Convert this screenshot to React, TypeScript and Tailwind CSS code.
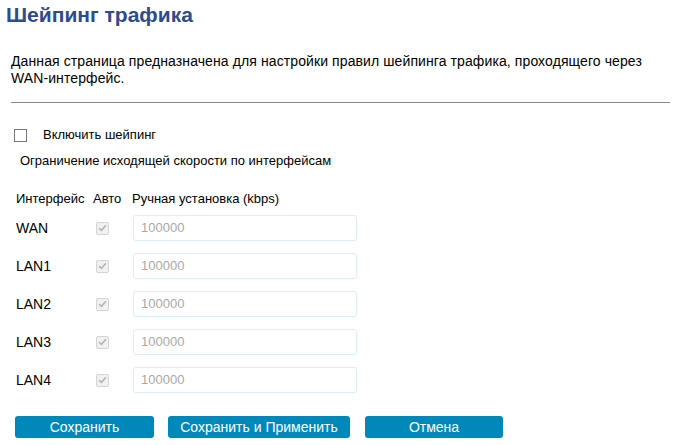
import { useState } from "react";

const rows = ["WAN", "LAN1", "LAN2", "LAN3", "LAN4"];

function AutoBox() {
  return (
    <span className="flex h-[13px] w-[13px] items-center justify-center rounded-[2px] border border-[#d4d4d4] bg-[#f1f1f1]">
      <svg width="9" height="8" viewBox="0 0 9 8">
        <path d="M1 4.2 L3.4 6.4 L8 1.2" fill="none" stroke="#b5b5b5" strokeWidth="1.6" />
      </svg>
    </span>
  );
}

export default function App() {
  const [enabled, setEnabled] = useState(false);

  return (
    <div className="h-[445px] w-[680px] bg-white text-black" style={{ fontFamily: '"Liberation Sans", Arial, sans-serif' }}>
      <h1 className="pl-[6px] pt-[2px] text-[21px] font-bold leading-[26px] text-[#2d4b8e]">Шейпинг трафика</h1>

      <p className="mt-[25px] pl-[11px] pr-[20px] text-[14px] leading-[17px] tracking-[0.1px]">
        Данная страница предназначена для настройки правил шейпинга трафика, проходящего через WAN-интерфейс.
      </p>

      <div className="mx-[11px] mt-[15px] h-px w-[659px] bg-[#8a8a8a]" />

      <label className="mt-[24px] flex items-center pl-[14px] text-[13px] leading-[16px]">
        <span
          onClick={() => setEnabled(!enabled)}
          className="h-[13px] w-[13px] border border-[#767676] bg-white"
        />
        <span className="pl-[16px]">Включить шейпинг</span>
      </label>

      <div className="mt-[10px] pl-[20px] text-[13px] leading-[16px]">Ограничение исходящей скорости по интерфейсам</div>

      <div className="mt-[22px] flex pl-[16px] text-[13px] leading-[16px]">
        <span className="w-[77px]">Интерфейс</span>
        <span className="w-[39px]">Авто</span>
        <span>Ручная установка (kbps)</span>
      </div>

      <div className="mt-[8px] flex flex-col gap-[12px] pl-[16px]">
        {rows.map((r) => (
          <div key={r} className="flex items-center text-[14px]">
            <span className="w-[80px]">{r}</span>
            <span className="w-[37px]">
              <AutoBox />
            </span>
            <div className="flex h-[26px] w-[224px] items-center rounded-[3px] border border-[#d9f0fb] bg-white pl-[7px] text-[13px] text-[#a9a9a9]">
              100000
            </div>
          </div>
        ))}
      </div>

      <div className="mt-[23px] flex gap-[14px] pl-[15px] text-[14px] text-white">
        <button className="h-[22px] w-[139px] rounded-[3px] bg-[#0088bb]">Сохранить</button>
        <button className="h-[22px] w-[182px] rounded-[3px] bg-[#0088bb]">Сохранить и Применить</button>
        <button className="ml-px h-[22px] w-[138px] rounded-[3px] bg-[#0088bb]">Отмена</button>
      </div>
    </div>
  );
}
